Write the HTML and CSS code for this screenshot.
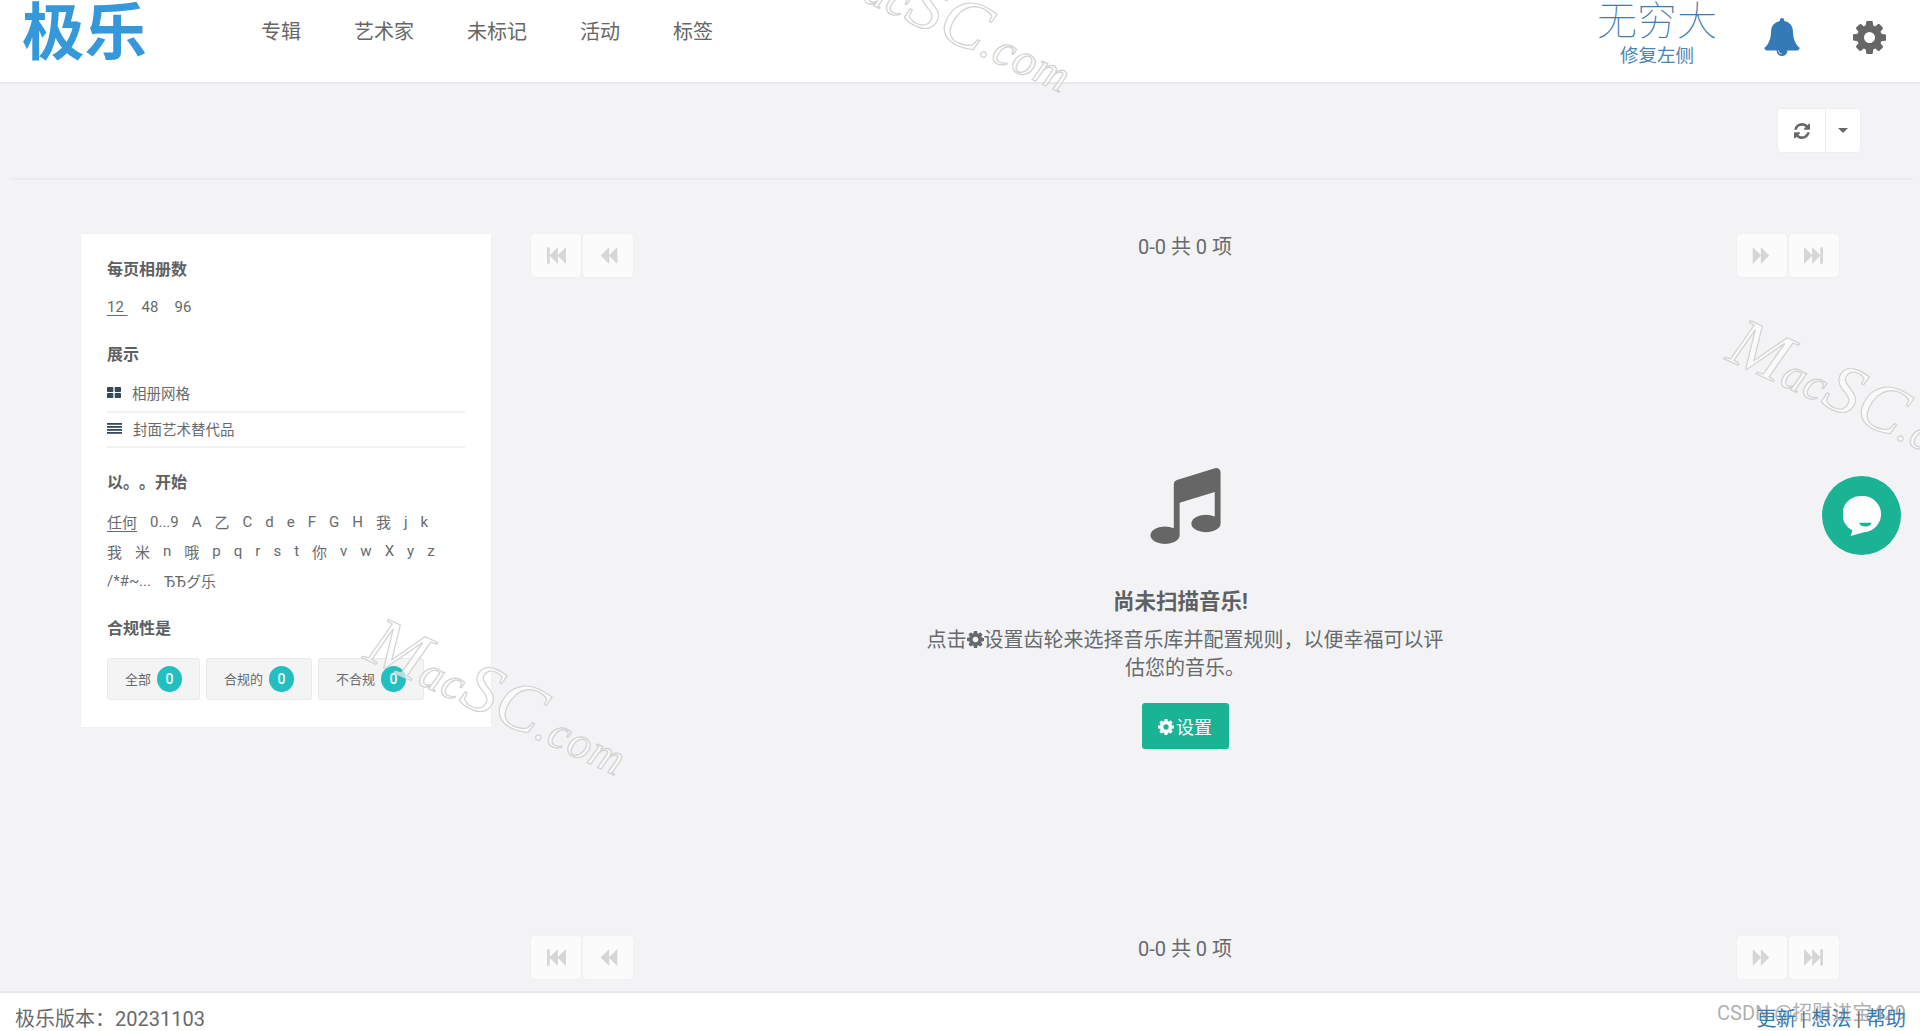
FILE: index.html
```html
<html lang="zh">

<head>
    <meta charset="UTF-8">
    <meta name="viewport" content="width=device-width, initial-scale=1.0">
    <title>极乐</title>
    <link rel="stylesheet" href="styles.css">
</head>

<body>
    <svg class="sprite" xmlns="http://www.w3.org/2000/svg">
        <symbol id="i-cog" viewBox="128 128 1536 1536">
            <path d="M1152 896q0-106-75-181t-181-75-181 75-75 181 75 181 181 75 181-75 75-181zm512-109v222q0 12-8 23t-20 13l-185 28q-19 54-39 91 35 50 107 138 10 12 10 25t-9 23q-27 37-99 108t-94 71q-12 0-26-9l-138-108q-44 23-91 38-16 136-29 186-7 28-36 28h-222q-14 0-24.5-8.5t-11.5-21.5l-28-184q-49-16-90-37l-141 107q-10 9-25 9-14 0-25-11-126-114-165-168-7-10-7-23 0-12 8-23 15-21 51-66.5t54-70.5q-27-50-41-99l-183-27q-13-2-21-12.5t-8-23.5v-222q0-12 8-23t19-13l186-28q14-46 39-92-40-57-107-138-10-12-10-24 0-10 9-23 26-36 98.5-107.5t94.5-71.5q13 0 26 10l138 107q44-23 91-38 16-136 29-186 7-28 36-28h222q14 0 24.5 8.5t11.5 21.5l28 184q49 16 90 37l142-107q9-9 24-9 13 0 25 10 129 119 165 170 7 8 7 22 0 12-8 23-15 21-51 66.5t-54 70.5q26 50 41 98l183 28q13 2 21 12.5t8 23.5z"/>
        </symbol>
        <symbol id="i-fast" viewBox="0 0 1792 1792">
            <path d="M1747 141q19-19 32-13t13 32v1472q0 26-13 32t-32-13l-710-710q-9-9-13-19v710q0 26-13 32t-32-13l-710-710q-9-9-13-19v678q0 26-19 45t-45 19h-128q-26 0-45-19t-19-45v-1408q0-26 19-45t45-19h128q26 0 45 19t19 45v678q4-11 13-19l710-710q19-19 32-13t13 32v710q4-11 13-19z"/>
        </symbol>
        <symbol id="i-back" viewBox="0 0 1792 1792">
            <path d="M1683 141q19-19 32-13t13 32v1472q0 26-13 32t-32-13l-710-710q-8-9-13-19v710q0 26-13 32t-32-13l-710-710q-19-19-19-45t19-45l710-710q19-19 32-13t13 32v710q5-11 13-19z"/>
        </symbol>
    </svg>

    <header class="topbar">
        <a class="logo">极乐</a>
        <nav class="nav">
            <a>专辑</a>
            <a>艺术家</a>
            <a>未标记</a>
            <a>活动</a>
            <a>标签</a>
        </nav>
        <div class="topbar-right">
            <div class="motto">
                <div class="motto-big">无穷大</div>
                <div class="motto-small">修复左侧</div>
            </div>
            <svg class="bell" viewBox="64 0 1664 1792">
                <path d="M912 1696q0-16-16-16-59 0-101.5-42.5t-42.5-101.5q0-16-16-16t-16 16q0 73 51.5 124.5t124.5 51.5q16 0 16-16zm816-288q0 52-38 90t-90 38h-448q0 106-75 181t-181 75-181-75-75-181h-448q-52 0-90-38t-38-90q50-42 91-88t85-119.5 74.5-158.5 50-206 19.5-260q0-152 117-282.5t307-158.5q-8-19-8-39 0-40 28-68t68-28 68 28 28 68q0 20-8 39 190 28 307 158.5t117 282.5q0 139 19.5 260t50 206 74.5 158.5 85 119.5 91 88z"/>
            </svg>
            <svg class="gear"><use href="#i-cog"/></svg>
        </div>
    </header>

    <div class="toolbar">
        <div class="btn-group">
            <button class="tool-btn refresh">
                <svg viewBox="128 128 1536 1536">
                    <path d="M1639 1056q0 5-1 7-64 268-268 434.5t-478 166.5q-146 0-282.5-55t-243.5-157l-129 129q-19 19-45 19t-45-19-19-45v-448q0-26 19-45t45-19h448q26 0 45 19t19 45-19 45l-137 137q71 66 161 102t187 36q134 0 250-65t186-179q11-17 53-117 8-23 30-23h192q13 0 22.5 9.5t9.5 22.5zm25-800v448q0 26-19 45t-45 19h-448q-26 0-45-19t-19-45 19-45l138-138q-148-137-349-137-134 0-250 65t-186 179q-11 17-53 117-8 23-30 23h-199q-13 0-22.5-9.5t-9.5-22.5v-7q65-268 270-434.5t480-166.5q146 0 284 55.5t245 156.5l130-129q19-19 45-19t45 19 19 45z"/>
                </svg>
            </button>
            <button class="tool-btn caret-btn"><span class="caret"></span></button>
        </div>
    </div>

    <main class="main">
        <aside class="filters">
            <h5>每页相册数</h5>
            <div class="per-page">
                <a class="active first">12&nbsp;</a>
                <a>48</a>
                <a>96</a>
            </div>

            <h5 class="title-show">展示</h5>
            <ul class="show-list">
                <li>
                    <svg class="show-icon" viewBox="0 0 14 11">
                        <rect width="6.3" height="5" rx="0.8"/>
                        <rect x="7.7" width="6.3" height="5" rx="0.8"/>
                        <rect y="6" width="6.3" height="5" rx="0.8"/>
                        <rect x="7.7" y="6" width="6.3" height="5" rx="0.8"/>
                    </svg>
                    相册网格
                </li>
                <li>
                    <svg class="show-icon wide" viewBox="0 0 15 11">
                        <rect width="15" height="1.8"/>
                        <rect y="3" width="15" height="1.8"/>
                        <rect y="6" width="15" height="1.8"/>
                        <rect y="9" width="15" height="1.8"/>
                    </svg>
                    封面艺术替代品
                </li>
            </ul>

            <h5 class="title-start">以。。开始</h5>
            <div class="letters">
                <div class="letter-row">
                    <a class="active">任何</a><a>0...9</a><a>A</a><a>乙</a><a>C</a><a>d</a><a>e</a><a>F</a><a>G</a><a>H</a><a>我</a><a>j</a><a>k</a>
                </div>
                <div class="letter-row">
                    <a>我</a><a>米</a><a>n</a><a>哦</a><a>p</a><a>q</a><a>r</a><a>s</a><a>t</a><a>你</a><a>v</a><a>w</a><a>X</a><a>y</a><a>z</a>
                </div>
                <div class="letter-row">
                    <a>/*#~...</a><a>ЂЂグ乐</a>
                </div>
            </div>

            <h5 class="title-legal">合规性是</h5>
            <div class="legal">
                <button class="legal-btn">全部<span class="badge">0</span></button>
                <button class="legal-btn">合规的<span class="badge">0</span></button>
                <button class="legal-btn">不合规<span class="badge">0</span></button>
            </div>
        </aside>

        <section class="content">
            <div class="pager">
                <div class="pager-btns">
                    <button><svg><use href="#i-fast"/></svg></button>
                    <button><svg><use href="#i-back"/></svg></button>
                </div>
                <div class="pager-text">0-0 共 0 项</div>
                <div class="pager-btns">
                    <button><svg class="flip"><use href="#i-back"/></svg></button>
                    <button><svg class="flip"><use href="#i-fast"/></svg></button>
                </div>
            </div>

            <div class="empty">
                <svg class="music" viewBox="128 128 1536 1664">
                    <path d="M1664 224v1120q0 50-34 89t-86 60.5-103.5 32-96.5 10.5-96.5-10.5-103.5-32-86-60.5-34-89 34-89 86-60.5 103.5-32 96.5-10.5q105 0 192 39v-537l-768 237v709q0 50-34 89t-86 60.5-103.5 32-96.5 10.5-96.5-10.5-103.5-32-86-60.5-34-89 34-89 86-60.5 103.5-32 96.5-10.5q105 0 192 39v-967q0-31 19-56.5t49-35.5l832-256q12-4 28-4 40 0 68 28t28 68z"/>
                </svg>
                <h3>尚未扫描音乐!</h3>
                <p>点击<svg class="cog-inline"><use href="#i-cog"/></svg>设置齿轮来选择音乐库并配置规则，以便幸福可以评估您的音乐。</p>
                <button class="btn-setup"><svg class="cog-inline"><use href="#i-cog"/></svg>设置</button>
            </div>

            <div class="pager">
                <div class="pager-btns">
                    <button><svg><use href="#i-fast"/></svg></button>
                    <button><svg><use href="#i-back"/></svg></button>
                </div>
                <div class="pager-text">0-0 共 0 项</div>
                <div class="pager-btns">
                    <button><svg class="flip"><use href="#i-back"/></svg></button>
                    <button><svg class="flip"><use href="#i-fast"/></svg></button>
                </div>
            </div>
        </section>
    </main>

    <footer class="footer">
        <div>极乐版本：20231103</div>
        <div class="footer-links"><a>更新</a> | <a>想法</a> | <a>帮助</a></div>
    </footer>

    <!-- 右侧聊天按钮 -->
    <div class="chat">
        <svg viewBox="0 0 40 44">
            <path fill="#fff" d="M20 1a19 19 0 0 1 2 38l-14 4 2-6A19 19 0 0 1 20 1z"/>
            <path fill="#1ab394" d="M17 29h13q-1 4-6.500 4T17 29z"/>
        </svg>
    </div>

    <!-- 水印 -->
    <div class="mark mark-top"><span>M</span>ac<span>SC</span>.com</div>
    <div class="mark mark-card"><span>M</span>ac<span>SC</span>.com</div>
    <div class="mark mark-right"><span>M</span>ac<span>SC</span>.com</div>
    <div class="csdn">CSDN @招财进宝429</div>
</body>

</html>
```

FILE: styles.css
```css
* {
    box-sizing: border-box;
}

html,
body {
    height: 100%;
}

body {
    margin: 0;
    display: flex;
    flex-direction: column;
    overflow: hidden;
    position: relative;
    background-color: #f3f3f5;
    color: #676a6c;
    font-family: Roboto, "Noto Sans CJK SC", sans-serif;
}

button {
    font-family: inherit;
    color: inherit;
    cursor: pointer;
}

.sprite {
    display: none;
}

/* 顶栏 */
.topbar {
    height: 84px;
    flex: none;
    display: flex;
    align-items: flex-start;
    background-color: white;
    border-bottom: 2px solid #e7e8ea;
}

.logo {
    margin: -10px 0 0 22px;
    width: 239px;
    font-size: 62.500px;
    line-height: 88px;
    font-weight: bold;
    color: #3498db;
}

.nav {
    display: flex;
    gap: 53px;
    padding-top: 18px;
}

    .nav a {
        font-size: 20px;
        line-height: 28px;
        color: #666;
    }

.topbar-right {
    margin-left: auto;
    display: flex;
    align-items: flex-start;
}

.motto {
    width: 120px;
    text-align: center;
    color: #4a84b4;
}

.motto-big {
    margin-top: -4px;
    font-size: 40px;
    line-height: 52px;
    font-weight: 100;
    white-space: nowrap;
    color: #3f7aab;
}

.motto-small {
    margin-top: -4px;
    font-size: 18.500px;
    line-height: 24px;
}

.bell {
    width: 36px;
    height: 38px;
    margin: 18px 0 0 47px;
    fill: #337ab7;
}

.gear {
    width: 33px;
    height: 33px;
    margin: 21px 34px 0 53px;
    fill: #666;
}

/* 工具条 */
.toolbar {
    height: 96px;
    flex: none;
    margin: 0 7px 0 10px;
    padding: 25px 53px 0 0;
    display: flex;
    justify-content: flex-end;
    border-bottom: 2px solid #ebecee;
}

.btn-group {
    display: flex;
    height: 43px;
    border-radius: 3px;
    background-color: white;
    box-shadow: 0 0 2px rgba(0, 0, 0, 0.08);
}

.tool-btn {
    padding: 0;
    border: none;
    background: none;
    display: flex;
    align-items: center;
    justify-content: center;
}

.refresh {
    width: 48px;
    border-right: 1px solid #e7e8ea;
}

    .refresh svg {
        width: 16px;
        height: 16px;
        fill: #676a6c;
    }

.caret-btn {
    width: 34px;
}

.caret {
    border-top: 5px solid #676a6c;
    border-left: 5px solid transparent;
    border-right: 5px solid transparent;
}

/* 主体 */
.main {
    flex: 1;
    min-height: 0;
    display: flex;
    gap: 40px;
    padding: 54px 81px 12px;
}

.filters {
    width: 410px;
    flex: none;
    align-self: flex-start;
    padding: 25px 26px 27px;
    background-color: white;
    box-shadow: 0 0 2px rgba(0, 0, 0, 0.05);
}

    .filters h5 {
        margin: 0;
        font-size: 16px;
        line-height: 22px;
        font-weight: bold;
        color: #5e6062;
    }

.per-page {
    display: flex;
    gap: 16px;
    margin-top: 16px;
    font-size: 15px;
    line-height: 20px;
}

    .per-page .first {
        margin-right: -2px;
    }

.active {
    text-decoration: underline;
    text-underline-offset: 3px;
}

.filters .title-show {
    margin-top: 27px;
}

.show-list {
    list-style: none;
    margin: 11px 0 0;
    padding: 0;
    font-size: 14.500px;
}

    .show-list li {
        height: 36px;
        padding-bottom: 3px;
        display: flex;
        align-items: center;
        gap: 11px;
        border-bottom: 2px solid #f0f1f2;
    }

        .show-list li + li {
            height: 35px;
        }

.show-icon {
    width: 14px;
    height: 11px;
    fill: #34495e;
}

    .show-icon.wide {
        width: 15px;
    }

.filters .title-start {
    margin-top: 24px;
    text-spacing-trim: space-all;
}

.letters {
    margin-top: 13px;
    font-size: 15px;
}

.letter-row {
    height: 29.500px;
    display: flex;
    align-items: center;
    gap: 13px;
}

.filters .title-legal {
    margin-top: 22px;
}

.legal {
    display: flex;
    gap: 6px;
    margin-top: 18px;
}

.legal-btn {
    height: 42px;
    padding: 0 17px;
    display: flex;
    align-items: center;
    gap: 6px;
    font-size: 13px;
    border: 1px solid #e9eaec;
    border-radius: 3px;
    background-color: #f4f4f5;
}

.badge {
    width: 25px;
    height: 26px;
    border-radius: 50%;
    background-color: #23bfc0;
    color: white;
    font-size: 14px;
    font-weight: 500;
    line-height: 27px;
    text-align: center;
}

/* 右侧内容 */
.content {
    flex: 1;
    min-width: 0;
    display: flex;
    flex-direction: column;
    justify-content: space-between;
}

.pager {
    display: flex;
    justify-content: space-between;
    align-items: flex-start;
}

.pager-btns {
    display: flex;
    gap: 2px;
    width: 102px;
    height: 43px;
}

    .pager-btns button {
        flex: 1;
        padding: 0;
        border: none;
        border-radius: 3px;
        background-color: #fbfbfc;
        box-shadow: 0 0 1px rgba(0, 0, 0, 0.1);
        display: flex;
        align-items: center;
        justify-content: center;
    }

    .pager-btns svg {
        width: 19px;
        height: 19px;
        fill: #d6d6d6;
    }

.flip {
    transform: scaleX(-1);
}

.pager-text {
    font-size: 20px;
    line-height: 26px;
}

.empty {
    margin-top: 3px;
    display: flex;
    flex-direction: column;
    align-items: center;
}

.music {
    width: 71px;
    height: 76px;
    fill: #666;
}

.empty h3 {
    margin: 44px 0 0;
    padding-right: 9px;
    font-size: 21.500px;
    line-height: 28px;
    font-weight: bold;
    color: #5e6062;
}

.empty p {
    width: 530px;
    margin: 10px 0 0;
    font-size: 20px;
    line-height: 28px;
    text-align: center;
}

    .empty p .cog-inline {
        width: 17px;
        height: 17px;
    }

.cog-inline {
    width: 16px;
    height: 16px;
    vertical-align: -1px;
    fill: currentColor;
}

.btn-setup {
    width: 87px;
    height: 46px;
    margin-top: 21px;
    padding: 0;
    border: none;
    border-radius: 3px;
    background-color: #1ab394;
    color: white;
    font-size: 18px;
}

    .btn-setup .cog-inline {
        margin-right: 2px;
    }

/* 底栏 */
.footer {
    height: 40px;
    flex: none;
    padding: 12px 14px 0 15px;
    display: flex;
    justify-content: space-between;
    background-color: white;
    border-top: 2px solid #e7e8ea;
    font-size: 20px;
    line-height: 28px;
}

.footer-links a {
    color: #337ab7;
}

/* 浮在内容上的部分 */
.chat {
    position: absolute;
    left: 1822px;
    top: 476px;
    width: 79px;
    height: 79px;
    border-radius: 50%;
    background-color: #1ab394;
    display: flex;
    align-items: center;
    justify-content: center;
}

    .chat svg {
        width: 38px;
        height: 42px;
    }

.mark {
    position: absolute;
    font-family: "Liberation Serif", serif;
    font-style: italic;
    font-size: 46px;
    line-height: 70px;
    letter-spacing: 1px;
    white-space: nowrap;
    color: rgba(255, 255, 255, 0.6);
    -webkit-text-stroke: 1.200px #d2d2d2;
    transform: rotate(25deg);
    transform-origin: 0 57px;
    pointer-events: none;
}

    .mark span {
        font-size: 70px;
    }

.mark-top {
    left: 808px;
    top: -83px;
}

.mark-card {
    left: 363px;
    top: 600px;
}

.mark-right {
    left: 1725px;
    top: 301px;
}

.csdn {
    position: absolute;
    left: 1717px;
    top: 999px;
    font-size: 20px;
    line-height: 28px;
    white-space: nowrap;
    color: rgba(120, 120, 120, 0.6);
}
```
